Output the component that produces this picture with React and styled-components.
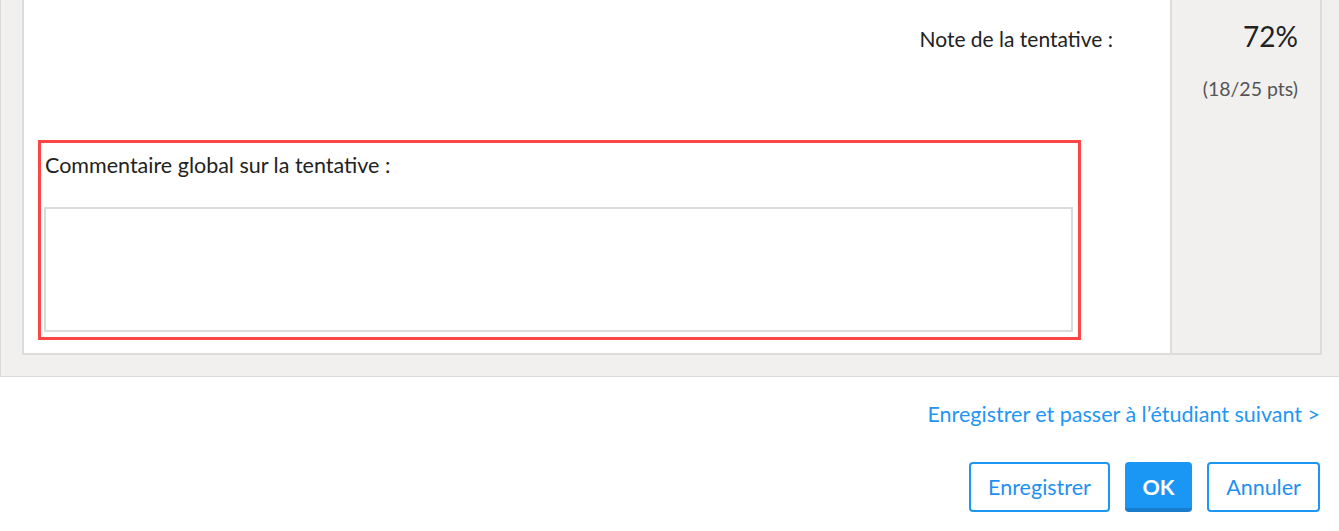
import React from "react";
import styled, { createGlobalStyle } from "styled-components";

const Global = createGlobalStyle`
  html, body { margin: 0; padding: 0; background: #fff; }
  body { font-family: Lato, "Open Sans", sans-serif; color: #222; }
  * { box-sizing: border-box; }
`;

const Outer = styled.div`
  background: #f1f0ee;
  border-left: 1px solid #d9d9d9;
  border-bottom: 1px solid #d9d9d9;
  padding: 0 17px 21px 21px;
`;

const Panel = styled.div`
  display: grid;
  grid-template-columns: 1fr 150px;
  border: 2px solid #dcdcdc;
  border-top: 0;
`;

const MainCell = styled.div`
  background: #fff;
  padding: 26px 0 13px 14px;
`;

const NoteRow = styled.div`
  text-align: right;
  padding-right: 57px;
  font-size: 21px;
  line-height: 26px;
`;

const CommentBox = styled.div`
  margin: 88px 89px 0 0;
  border: 3px solid #fd4646;
  padding: 9px 5px 5px 3px;
`;

const Label = styled.label`
  display: block;
  font-size: 21.5px;
  line-height: 26px;
  padding-left: 1px;
`;

const TextArea = styled.textarea`
  display: block;
  width: 100%;
  height: 125px;
  margin-top: 29px;
  border: 2px solid #dadada;
  resize: none;
  font: inherit;
  outline: none;
`;

const ScoreCell = styled.div`
  border-left: 2px solid #dcdcdc;
  background: #f1f0ee;
  padding: 20px 22px 0 0;
  text-align: right;
`;

const Percent = styled.div`
  font-size: 28px;
  line-height: 32px;
  color: #222;
`;

const Points = styled.div`
  margin-top: 25px;
  font-size: 19.5px;
  line-height: 24px;
  color: #555;
`;

const Footer = styled.div`
  padding: 24px 19px 19px 0;
  display: flex;
  flex-direction: column;
  align-items: flex-end;
`;

const NextLink = styled.a`
  color: #2196f3;
  font-size: 21.5px;
  line-height: 26px;
  text-decoration: none;
  cursor: pointer;
`;

const Buttons = styled.div`
  margin-top: 35px;
  display: flex;
  gap: 15px;
`;

const Button = styled.button`
  height: 50px;
  padding: 0 16px;
  min-width: ${(p) => p.$w}px;
  font-family: inherit;
  font-size: 21.5px;
  border-radius: 4px;
  cursor: pointer;
  display: flex;
  align-items: center;
  justify-content: center;
  ${(p) =>
    p.$primary
      ? `
    background: #1a97f5;
    color: #fff;
    border: 0;
    border-bottom: 4px solid #1a7dcc;
    padding-top: 4px;
    font-weight: 700;
  `
      : `
    background: #fff;
    color: #1e90ee;
    border: 2px solid #1e96f3;
  `}
`;

export default function App() {
  return (
    <>
      <Global />
      <Outer>
        <Panel>
          <MainCell>
            <NoteRow>Note de la tentative :</NoteRow>
            <CommentBox>
              <Label htmlFor="comment">Commentaire global sur la tentative :</Label>
              <TextArea id="comment" />
            </CommentBox>
          </MainCell>
          <ScoreCell>
            <Percent>72%</Percent>
            <Points>(18/25 pts)</Points>
          </ScoreCell>
        </Panel>
      </Outer>
      <Footer>
        <NextLink>Enregistrer et passer à l’étudiant suivant &gt;</NextLink>
        <Buttons>
          <Button $w={141}>Enregistrer</Button>
          <Button $primary $w={67}>OK</Button>
          <Button $w={113}>Annuler</Button>
        </Buttons>
      </Footer>
    </>
  );
}
